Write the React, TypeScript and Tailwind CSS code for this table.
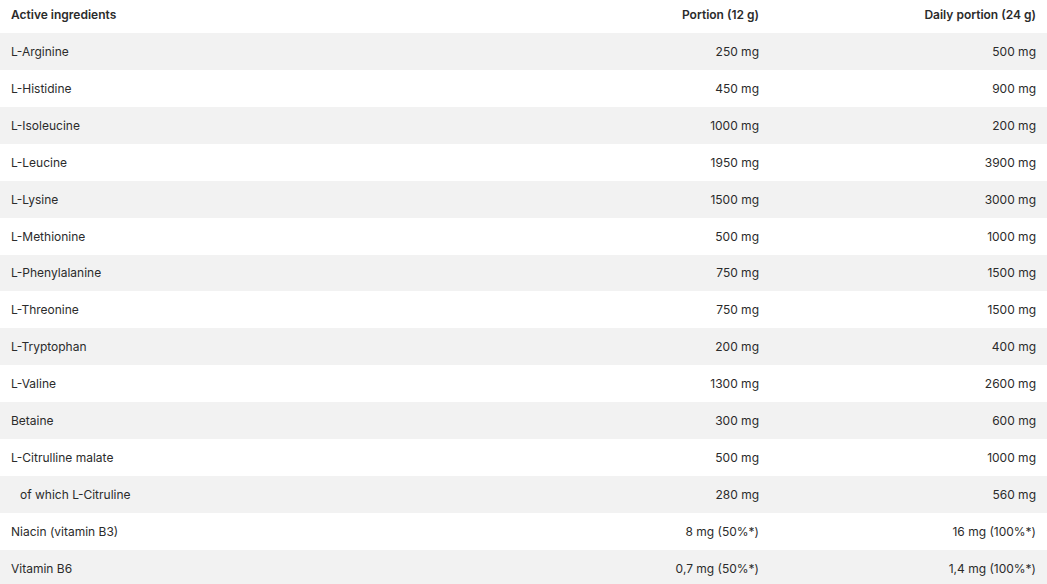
const rows: [string, string, string, boolean?][] = [
  ['L-Arginine', '250 mg', '500 mg'],
  ['L-Histidine', '450 mg', '900 mg'],
  ['L-Isoleucine', '1000 mg', '200 mg'],
  ['L-Leucine', '1950 mg', '3900 mg'],
  ['L-Lysine', '1500 mg', '3000 mg'],
  ['L-Methionine', '500 mg', '1000 mg'],
  ['L-Phenylalanine', '750 mg', '1500 mg'],
  ['L-Threonine', '750 mg', '1500 mg'],
  ['L-Tryptophan', '200 mg', '400 mg'],
  ['L-Valine', '1300 mg', '2600 mg'],
  ['Betaine', '300 mg', '600 mg'],
  ['L-Citrulline malate', '500 mg', '1000 mg'],
  ['of which L-Citruline', '280 mg', '560 mg', true],
  ['Niacin (vitamin B3)', '8 mg (50%*)', '16 mg (100%*)'],
  ['Vitamin B6', '0,7 mg (50%*)', '1,4 mg (100%*)'],
];

export default function App() {
  return (
    <div className="w-[1047px] h-[584px] overflow-hidden bg-white text-[#2b2b2b] font-['Inter','Noto_Sans',sans-serif] text-[12px]">
      <table className="w-full border-collapse">
        <thead>
          <tr className="h-[33px]">
            <th className="px-[11px] pb-[3px] text-left font-semibold">Active ingredients</th>
            <th className="w-[277px] px-[11px] pb-[3px] text-right font-semibold">Portion (12 g)</th>
            <th className="w-[277px] px-[11px] pb-[3px] text-right font-semibold">Daily portion (24 g)</th>
          </tr>
        </thead>
        <tbody>
          {rows.map(([name, portion, daily, sub], i) => (
            <tr key={name} className={`h-[36.93px] ${i % 2 === 0 ? 'bg-[#f2f2f2]' : 'bg-white'}`}>
              <td className={`${sub ? 'pl-[20px]' : 'pl-[11px]'} pr-[11px] pt-[1px]`}>{name}</td>
              <td className="px-[11px] pt-[1px] text-right">{portion}</td>
              <td className="px-[11px] pt-[1px] text-right">{daily}</td>
            </tr>
          ))}
        </tbody>
      </table>
    </div>
  );
}
